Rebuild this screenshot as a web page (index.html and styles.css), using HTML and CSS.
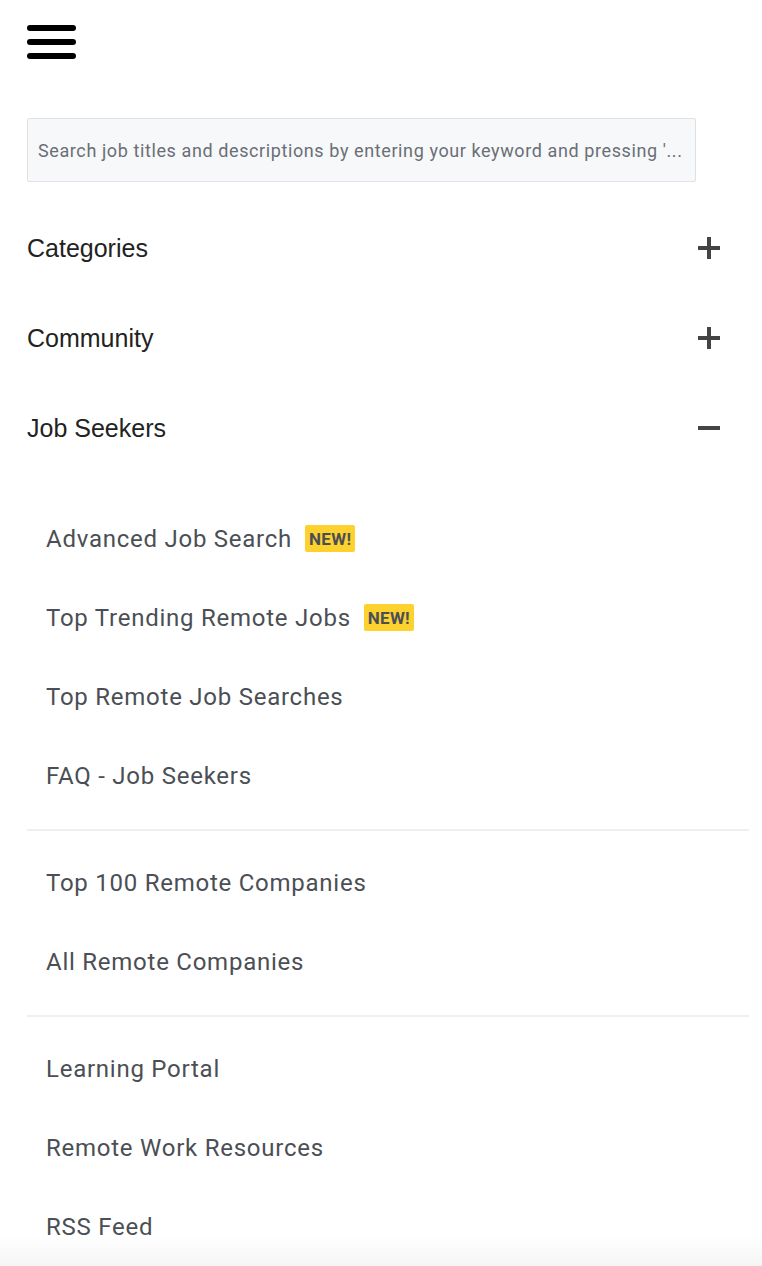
FILE: index.html
```html
<!DOCTYPE html>
<html>
<head>
<meta charset="utf-8">
<link rel="stylesheet" href="styles.css">
</head>
<body>
<div class="menu">
  <div class="top">
    <svg class="burger" width="50" height="36" viewBox="0 0 50 36">
      <line x1="3" y1="4" x2="46" y2="4" stroke="#000" stroke-width="6" stroke-linecap="round"/>
      <line x1="3" y1="18" x2="46" y2="18" stroke="#000" stroke-width="6" stroke-linecap="round"/>
      <line x1="3" y1="32" x2="46" y2="32" stroke="#000" stroke-width="6" stroke-linecap="round"/>
    </svg>
  </div>
  <div class="search">Search job titles and descriptions by entering your keyword and pressing '...</div>
  <div class="section">
    <span>Categories</span>
    <svg class="pm" width="22" height="22" viewBox="0 0 22 22"><rect x="0" y="9" width="22" height="4" fill="#444"/><rect x="9" y="0" width="4" height="22" fill="#444"/></svg>
  </div>
  <div class="section">
    <span>Community</span>
    <svg class="pm" width="22" height="22" viewBox="0 0 22 22"><rect x="0" y="9" width="22" height="4" fill="#444"/><rect x="9" y="0" width="4" height="22" fill="#444"/></svg>
  </div>
  <div class="section">
    <span>Job Seekers</span>
    <svg class="pm" width="22" height="22" viewBox="0 0 22 22"><rect x="0" y="9" width="22" height="4" fill="#444"/></svg>
  </div>
  <ul class="links first">
    <li>Advanced Job Search <span class="badge">NEW!</span></li>
    <li>Top Trending Remote Jobs <span class="badge">NEW!</span></li>
    <li>Top Remote Job Searches</li>
    <li>FAQ - Job Seekers</li>
  </ul>
  <ul class="links">
    <li>Top 100 Remote Companies</li>
    <li>All Remote Companies</li>
  </ul>
  <ul class="links">
    <li>Learning Portal</li>
    <li>Remote Work Resources</li>
    <li>RSS Feed</li>
  </ul>
</div>
<div class="fade"></div>
</body>
</html>
```

FILE: styles.css
```css
html, body {
  margin: 0;
  padding: 0;
  background: #fff;
}
body {
  font-family: "Liberation Sans", Arial, sans-serif;
  height: 1266px;
  overflow: hidden;
}
.menu {
  padding: 0 13px 0 27px;
}
.top {
  padding-top: 24px;
  height: 38px;
}
.burger {
  display: block;
}
.search {
  margin-top: 56px;
  width: 669px;
  height: 64px;
  box-sizing: border-box;
  background: #f7f8fa;
  border: 1px solid #dfe1e4;
  border-radius: 2px;
  padding: 0 10px;
  display: flex;
  align-items: center;
  font-family: "Roboto", sans-serif;
  font-size: 18px;
  color: #6a6f75;
  white-space: nowrap;
  overflow: hidden;
  letter-spacing: 0.6px;
}
.search + .section {
  margin-top: 21px;
}
.section {
  display: flex;
  justify-content: space-between;
  align-items: center;
  height: 90px;
  font-size: 25px;
  color: #222;
  padding-right: 30px;
}
.section .pm {
  margin-right: -1px;
}
.links {
  list-style: none;
  margin: 0;
  padding: 0 0 2px 19px;
  border-top: 2px solid #efefef;
}
.links.first {
  border-top: none;
  margin-top: 26px;
}
.links li {
  height: 79px;
  display: flex;
  align-items: center;
  font-family: "Roboto", sans-serif;
  font-size: 24px;
  letter-spacing: 0.75px;
  color: #4b4f55;
}
.links + .links {
  padding-top: 12px;
  margin-top: 12px;
}
.badge {
  display: inline-block;
  margin-left: 13px;
  background: #fdd22f;
  color: #4b4f55;
  font-size: 17px;
  letter-spacing: 0.3px;
  font-weight: bold;
  padding: 4px 4px 3px;
  border-radius: 2px;
  line-height: 20px;
}
.fade {
  position: fixed;
  left: 0;
  right: 0;
  bottom: 0;
  height: 30px;
  background: linear-gradient(to bottom, rgba(245,245,245,0), rgba(245,245,245,1));
}
```
